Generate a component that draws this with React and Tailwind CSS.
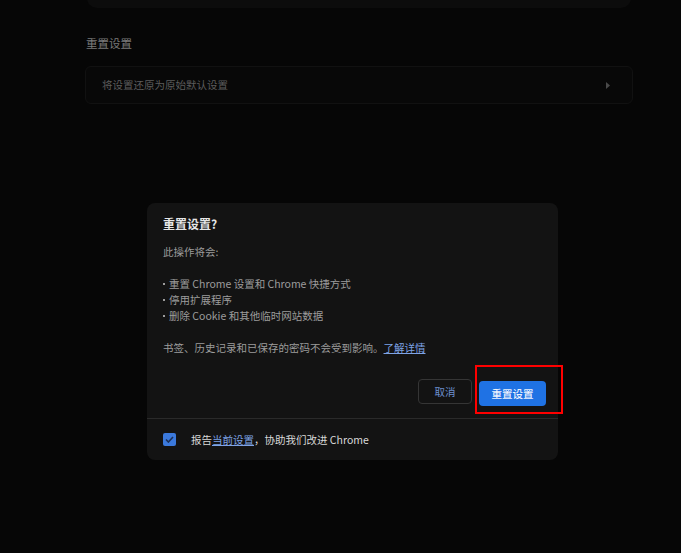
import React from 'react';

const font = { fontFamily: '"Noto Sans CJK SC", "Noto Sans", sans-serif' };

const Bullet = ({ children }) => (
    <div className="flex items-center">
        <span className="w-[6px] flex items-center">
            <span className="w-[2px] h-[2px] bg-[#9c9c9c]"></span>
        </span>
        <span>{children}</span>
    </div>
);

export default function App() {
    return (
        <div className="w-[681px] h-[553px] bg-[#060606] overflow-hidden flex flex-col" style={font}>
            {/* Settings page behind the overlay */}
            <div className="w-[548px] ml-[85px] flex flex-col">
                <div className="h-[10px] -mt-[2px] bg-[#0c0c0c] rounded-b-[12px] mx-[2px]"></div>
                <div className="mt-[26px] text-[11.5px] leading-[18px] text-[#7a7a7a] px-[1px]">重置设置</div>
                <div className="mt-[14px] h-[38px] border border-[#111111] bg-[#080808] rounded-[6px] flex items-center justify-between pl-[16px] pr-[22px]">
                    <span className="text-[10.5px] text-[#5c5c5c]">将设置还原为原始默认设置</span>
                    <svg width="4" height="7" viewBox="0 0 4 7"><path d="M0 0 L4 3.5 L0 7 Z" fill="#4a4a4a" /></svg>
                </div>
            </div>

            {/* Dialog */}
            <div className="mt-[99px] ml-[147px] w-[411px] h-[257px] bg-[#131313] rounded-[8px] flex flex-col">
                <div className="px-[16px] pt-[11px] pb-[12px] border-b border-[#2a2a2a]">
                    <div className="text-[12px] leading-[20px] font-bold text-[#e6e6e6]">重置设置?</div>
                    <div className="mt-[10px] text-[10.5px] leading-[16px] text-[#9c9c9c]">
                        <div>此操作将会:</div>
                        <div className="h-[16px]"></div>
                        <Bullet>重置 Chrome 设置和 Chrome 快捷方式</Bullet>
                        <Bullet>停用扩展程序</Bullet>
                        <Bullet>删除 Cookie 和其他临时网站数据</Bullet>
                        <div className="h-[16px]"></div>
                        <div>书签、历史记录和已保存的密码不会受到影响。<span className="text-[#7ea3e6] underline">了解详情</span></div>
                    </div>
                    <div className="mt-[23px] flex justify-end gap-[7px] mr-[-4px]">
                        <button className="w-[54px] h-[25px] border border-[#353535] rounded-[4px] text-[10.5px] text-[#6d8fcf]">取消</button>
                        <div className="relative">
                            <button className="w-[67px] h-[25px] bg-[#1f72e4] rounded-[4px] text-[10.5px] font-medium text-[#eef3fd]">重置设置</button>
                            <div className="absolute -left-[4px] -top-[14px] w-[88px] h-[49px] border-[2.5px] border-[#ff0000]"></div>
                        </div>
                    </div>
                </div>
                <div className="flex-1 flex items-center px-[16px] gap-[15px]">
                    <div className="w-[13px] h-[13px] rounded-[2px] bg-[#3b79dc] flex items-center justify-center">
                        <svg width="9" height="7" viewBox="0 0 9 7"><path d="M1 3.5 L3.4 6 L8 1" stroke="#1a2f57" strokeWidth="1.6" fill="none" /></svg>
                    </div>
                    <div className="text-[10.5px] text-[#d8d8d8]">
                        报告<span className="text-[#7ea3e6] underline">当前设置</span>，协助我们改进 Chrome
                    </div>
                </div>
            </div>
        </div>
    );
}
